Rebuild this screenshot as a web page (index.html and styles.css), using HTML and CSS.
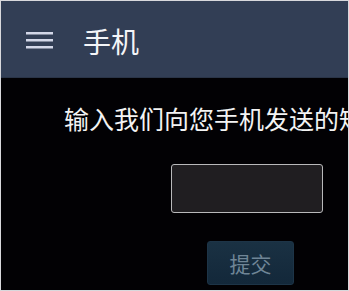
FILE: index.html
```html
<!DOCTYPE html>
<html lang="zh">
<head>
<meta charset="utf-8">
<link rel="stylesheet" href="styles.css">
</head>
<body>
<div class="page">
  <header class="bar">
    <svg class="menu" width="27" height="17" viewBox="0 0 27 17">
      <rect x="0" y="0" width="27" height="2.5" fill="#d3d7e8"/>
      <rect x="0" y="7" width="27" height="2.5" fill="#d3d7e8"/>
      <rect x="0" y="14" width="27" height="2.5" fill="#d3d7e8"/>
    </svg>
    <h1 class="title">手机</h1>
  </header>
  <main class="content">
    <p class="prompt">输入我们向您手机发送的短信验证码</p>
    <div class="code-input"></div>
    <button class="submit">提交</button>
  </main>
</div>
</body>
</html>
```
FILE: styles.css
```css
* { box-sizing: border-box; }
html, body { margin: 0; padding: 0; background: #000; }
.page {
  width: 349px;
  height: 291px;
  border: 1px solid #d8d8dc;
  background: #020104;
  overflow: hidden;
  font-family: "Noto Sans CJK SC", "Noto Sans", sans-serif;
}
.bar {
  height: 77px;
  background: #323e55;
  display: flex;
  align-items: center;
  border-bottom: 1px solid #2a3447;
}
.menu {
  margin-left: 25px;
  margin-top: 3px;
  display: block;
}
.title {
  margin: 0 0 0 30px;
  font-size: 28px;
  font-weight: normal;
  color: #f4f5f8;
  line-height: 28px;
  margin-top: 4px;
}
.content {
  display: flex;
  flex-direction: column;
  align-items: flex-start;
}
.prompt {
  margin: 28px 0 0 63px;
  font-size: 25px;
  line-height: 25px;
  color: #f3f3f3;
  white-space: nowrap;
}
.code-input {
  margin: 33px 0 0 170px;
  width: 152px;
  height: 49px;
  background: #201e21;
  border: 1.5px solid #b9b9bb;
  border-radius: 3px;
}
.submit {
  margin: 28px 0 0 206px;
  width: 87px;
  height: 44px;
  border: 1px solid #1d3447;
  border-radius: 3px;
  background: linear-gradient(#1a3143, #13283a);
  color: #6f8596;
  font-family: "Noto Sans CJK SC", sans-serif;
  font-size: 21px;
  padding: 0;
}
```
